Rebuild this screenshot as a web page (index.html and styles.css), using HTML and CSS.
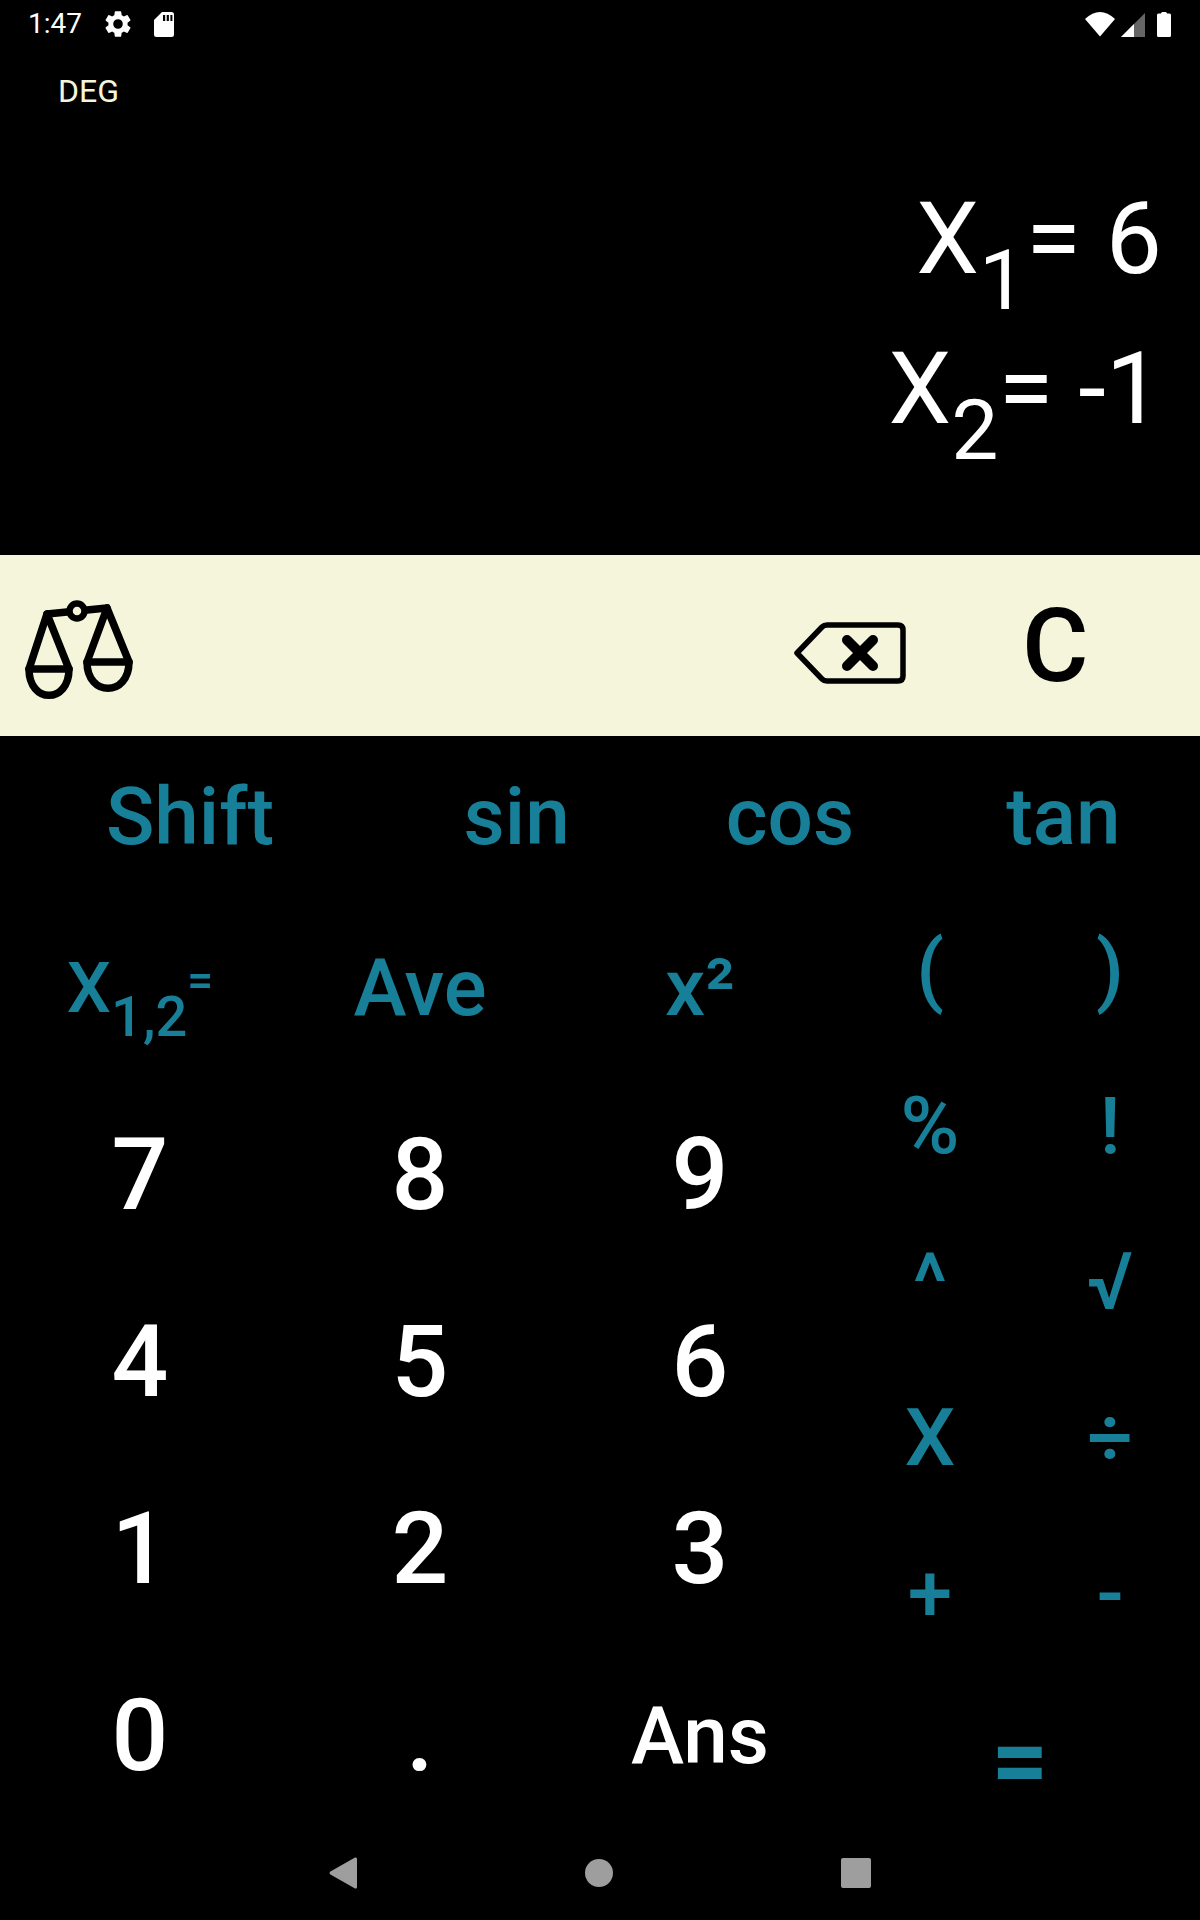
FILE: index.html
```html
<!DOCTYPE html>
<html lang="en">
<head>
<meta charset="utf-8">
<title>Calculator</title>
<link rel="stylesheet" href="styles.css">
</head>
<body>
<div class="app">
  <header class="status">
    <span class="time">1:47</span>
    <svg class="ic-gear" viewBox="0 0 24 24"><path fill="#fff" d="M19.14 12.94c.04-.3.06-.61.06-.94s-.02-.64-.07-.94l2.03-1.58a.49.49 0 0 0 .12-.61l-1.92-3.32a.49.49 0 0 0-.59-.22l-2.39.96a7 7 0 0 0-1.62-.94l-.36-2.54a.48.48 0 0 0-.48-.41h-3.84a.48.48 0 0 0-.47.41l-.36 2.54c-.59.24-1.13.57-1.62.94l-2.39-.96a.49.49 0 0 0-.59.22L2.74 8.87a.48.48 0 0 0 .12.61l2.03 1.58c-.05.3-.09.63-.09.94s.02.64.07.94l-2.03 1.58a.49.49 0 0 0-.12.61l1.92 3.32c.12.22.37.29.59.22l2.39-.96c.5.38 1.03.7 1.62.94l.36 2.54c.05.24.24.41.48.41h3.84c.24 0 .44-.17.47-.41l.36-2.54c.59-.24 1.13-.56 1.62-.94l2.39.96c.22.08.47 0 .59-.22l1.92-3.32a.48.48 0 0 0-.12-.61zM12 15.6A3.6 3.6 0 1 1 12 8.4a3.6 3.6 0 0 1 0 7.2z"/></svg>
    <svg class="ic-sd" viewBox="0 0 20 25"><path fill="#fff" d="M8 0h9.5A2.5 2.5 0 0 1 20 2.5v20a2.5 2.5 0 0 1-2.5 2.5h-15A2.5 2.500 0 0 1 0 22.500V8zM9 3v6h2.200V3zm3.700 0v6h2.200V3zm3.700 0v6h2V3z" fill-rule="evenodd"/></svg>
    <span class="status-gap"></span>
    <svg class="ic-wifi" viewBox="0 0 32 26"><path fill="#fff" d="M1 8Q16 -6 31 8L16 25.500z"/></svg>
    <svg class="ic-signal" viewBox="0 0 24 24"><path fill="#666" d="M24 0v24H0z"/><path fill="#fff" d="M13 11v13H0z"/></svg>
    <svg class="ic-batt" viewBox="0 0 14 25"><path fill="#fff" d="M4 1.500Q4 0 5.500 0h3Q10 0 10 1.500H12.500Q14 1.500 14 3v20.500Q14 25 12.500 25h-11Q0 25 0 23.500V3Q0 1.500 1.500 1.500z"/></svg>
  </header>

  <section class="display">
    <div class="mode">DEG</div>
    <div class="results">
      <div class="result">X<sub>1</sub>= 6</div>
      <div class="result">X<sub>2</sub>= -1</div>
    </div>
  </section>

  <section class="toolbar">
    <svg class="ic-scales" viewBox="0 0 112 104"><g fill="none" stroke="#000" stroke-width="7.500" stroke-linejoin="round" stroke-linecap="round"><path d="M23 19L83 13"/><path d="M23 19L5 74C5 109 45 109 45 74Z"/><path d="M5 74H45"/><path d="M83 13L63 67C63 102 105 102 105 67Z"/><path d="M63 67H105"/></g><circle cx="53" cy="16" r="7.500" fill="#f5f5dc" stroke="#000" stroke-width="6.500"/></svg>
    <svg class="ic-back" viewBox="0 0 112 62"><path d="M3 31L28 5Q30 3 33 3H104Q109 3 109 8V54Q109 59 104 59H33Q30 59 28 57Z" fill="none" stroke="#000" stroke-width="5.500" stroke-linejoin="round"/><path d="M53 18L79 44M79 18L53 44" fill="none" stroke="#000" stroke-width="10" stroke-linecap="round"/></svg>
    <button class="clear">C</button>
  </section>

  <main class="keypad">
    <div class="trig">
      <button class="key fn">Shift</button>
      <button class="key fn">sin</button>
      <button class="key fn">cos</button>
      <button class="key fn">tan</button>
    </div>
    <div class="lower">
      <div class="main-keys">
        <button class="key fn quad"><span class="quad-label">X<sub>1,2</sub><span class="quad-eq">=</span></span></button>
        <button class="key fn">Ave</button>
        <button class="key fn sq">x²</button>
        <button class="key num">7</button>
        <button class="key num">8</button>
        <button class="key num">9</button>
        <button class="key num">4</button>
        <button class="key num">5</button>
        <button class="key num">6</button>
        <button class="key num">1</button>
        <button class="key num">2</button>
        <button class="key num">3</button>
        <button class="key num">0</button>
        <button class="key num">.</button>
        <button class="key num ans">Ans</button>
      </div>
      <div class="op-keys">
        <div class="ops">
          <button class="key op">(</button>
          <button class="key op">)</button>
          <button class="key op">%</button>
          <button class="key op">!</button>
          <button class="key op">^</button>
          <button class="key op">√</button>
          <button class="key op">X</button>
          <button class="key op">÷</button>
          <button class="key op">+</button>
          <button class="key op">-</button>
        </div>
        <button class="key equals">=</button>
      </div>
    </div>
  </main>

  <footer class="nav">
    <svg class="ic-nav-back" viewBox="0 0 28 32"><path fill="#9e9e9e" d="M26 .6Q28 0 28 2V30Q28 32 26 31.400L1 17.200Q0 16 1 14.800Z"/></svg>
    <span class="nav-home"></span>
    <span class="nav-recent"></span>
  </footer>
</div>
</body>
</html>
```
FILE: styles.css
```css
* { box-sizing: border-box; }
html, body { margin: 0; padding: 0; background: #000; }
body { font-family: Roboto, "Noto Sans", sans-serif; }
.app { width: 1200px; height: 1920px; display: flex; flex-direction: column; background: #000; overflow: hidden; }
button { font: inherit; background: none; border: 0; padding: 0; margin: 0; color: inherit; }

.status { height: 48px; flex: none; display: flex; align-items: center; padding: 0 28px; color: #fff; }
.time { font-size: 28px; width: 56px; line-height: 48px; }
.ic-gear { width: 32px; height: 32px; margin-left: 18px; }
.ic-sd { width: 20px; height: 25px; margin-left: 20px; }
.status-gap { flex: 1; }
.ic-wifi { width: 32px; height: 26px; margin-right: 3px; }
.ic-signal { width: 24px; height: 24px; margin-left: 2px; margin-top: 2px; }
.ic-batt { width: 14px; height: 25px; margin-left: 12px; margin-right: 1px; }

.display { height: 507px; flex: none; position: relative; padding: 116px 38px 0 58px; color: #fff; }
.mode { position: absolute; left: 58px; top: 25px; font-size: 32px; line-height: 36px; color: #f5f5dc; }
.results { display: flex; flex-direction: column; align-items: flex-end; }
.result { font-size: 100px; line-height: 150px; font-weight: 400; }
.result sub { font-size: 84px; line-height: 0; vertical-align: -36px; }

.toolbar { height: 181px; flex: none; background: #f5f5dc; display: flex; align-items: center; padding: 0 0 0 24px; color: #000; }
.ic-scales { width: 112px; height: 104px; margin-top: 2px; }
.ic-back { width: 112px; height: 62px; margin-left: 658px; margin-top: 14px; }
.clear { width: 294px; padding-left: 116px; text-align: left; font-size: 102px; font-weight: 500; line-height: 1; }

.keypad { flex: 1; display: flex; flex-direction: column; }
.key { display: flex; align-items: center; justify-content: center; }
.fn, .op, .equals { color: #187f99; }
.fn { font-size: 80px; font-weight: 500; }
.num { font-size: 100px; font-weight: 500; color: #fff; }
.ans { font-size: 80px; }
.trig { height: 156px; flex: none; padding-top: 5px; display: grid; grid-template-columns: 380px repeat(3, 1fr); }
.lower { flex: 1; display: grid; grid-template-columns: 840px 360px; }
.main-keys { display: grid; grid-template-columns: repeat(3, 280px); grid-auto-rows: 187px; padding-top: 2px; }
.quad { font-size: 70px; }
.quad-label { line-height: 1; }
.quad sub { font-size: 56px; line-height: 0; vertical-align: -24px; }
.quad-eq { font-size: 46px; vertical-align: 16px; line-height: 0; }
.sq { font-size: 80px; }
.op-keys { display: flex; flex-direction: column; }
.ops { display: grid; grid-template-columns: repeat(2, 180px); grid-auto-rows: 156px; }
.op { font-size: 80px; font-weight: 500; }
.equals { flex: 1; font-size: 100px; font-weight: 700; padding-top: 20px; }

.nav { height: 96px; flex: none; display: flex; align-items: center; justify-content: center; gap: 228px; padding-bottom: 8px; }
.ic-nav-back { width: 28px; height: 32px; }
.nav-home { width: 28px; height: 28px; border-radius: 50%; background: #9e9e9e; }
.nav-recent { width: 30px; height: 30px; border-radius: 2px; background: #9e9e9e; }
```
